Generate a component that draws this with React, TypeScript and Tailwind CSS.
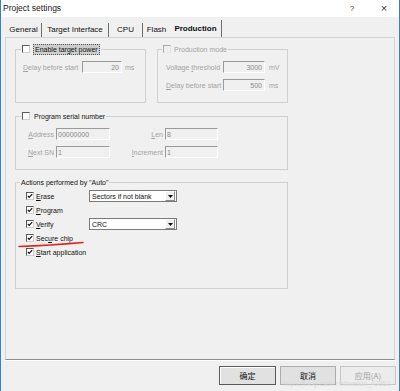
import React from 'react';

const Check = ({ checked, disabled }: { checked?: boolean; disabled?: boolean }) => (
  <span
    className={`inline-flex w-[8px] h-[8px] shrink-0 items-center justify-center border ${
      disabled
        ? 'border-t-[#a8a8a8] border-l-[#a8a8a8] border-b-[#e6e6e6] border-r-[#e6e6e6] bg-[#f0f0f0]'
        : 'border-t-[#5a5a5a] border-l-[#5a5a5a] border-b-[#cfcfcf] border-r-[#cfcfcf] bg-white'
    }`}
  >
    {checked && (
      <svg width="6" height="6" viewBox="0 0 6 6">
        <path d="M0.8 2.8 L2.2 4.3 L5.2 1.2" fill="none" stroke="#111" strokeWidth="1.2" />
      </svg>
    )}
  </span>
);

const Field = ({ value, w }: { value: string; w: string }) => (
  <div
    className={`${w} h-[12px] border border-t-[#9a9a9a] border-l-[#9a9a9a] border-b-white border-r-white bg-[#f0f0f0] text-[#8a8a8a] flex items-center leading-none`}
  >
    {value}
  </div>
);

const Combo = ({ value }: { value: string }) => (
  <div className="w-[88px] h-[12px] border border-[#7a7a7a] bg-white flex items-center">
    <span className="flex-1 pl-[2px] text-[#111] leading-none">{value}</span>
    <span className="w-[10px] h-[10px] mr-[1px] border border-t-white border-l-white border-b-[#8a8a8a] border-r-[#8a8a8a] bg-[#f0f0f0] flex items-center justify-center">
      <svg width="5" height="3" viewBox="0 0 5 3">
        <path d="M0 0 H5 L2.5 3 Z" fill="#111" />
      </svg>
    </span>
  </div>
);

const U = ({ children }: { children: React.ReactNode }) => <span className="underline underline-offset-1">{children}</span>;

const tabs = [
  { label: 'General', w: 'w-[36px]', bar: true },
  { label: 'Target Interface', w: 'w-[67px]', bar: true },
  { label: 'CPU', w: 'w-[34px]', bar: true },
  { label: 'Flash', w: 'w-[27px]', bar: false },
];

export default function App() {
  return (
    <div className="relative w-[400px] h-[391px] overflow-hidden bg-[#f0f0f0] border-l border-r border-[#3d7fc4] flex flex-col font-['Liberation_Sans',Arial,sans-serif] text-[#111] select-none">
      {/* Title bar */}
      <div className="h-[17px] bg-white flex items-center shrink-0">
        <span className="pl-[2px] text-[8.5px] text-[#1a1a1a]">Project settings</span>
        <span className="ml-auto w-[10px] text-center text-[8px] text-[#333] mr-[22px]">?</span>
        <span className="w-[10px] text-center text-[11px] text-[#333] mr-[10px] leading-none">×</span>
      </div>

      {/* Tabs */}
      <div className="h-[20px] flex items-end pl-[5px] text-[8px] shrink-0">
        {tabs.map(t => (
          <div
            key={t.label}
            className={`${t.w} h-[14px] flex items-center justify-center ${t.bar ? 'border-r border-[#6e6e6e]' : ''}`}
          >
            {t.label}
          </div>
        ))}
        <div className="w-[52px] h-[17px] flex items-center justify-center font-bold border-r border-[#6e6e6e]">
          Production
        </div>
      </div>

      {/* Panel */}
      <div className="mx-[4px] h-[323px] border border-[#d4d4d4] border-b-[#8c8c8c] shadow-[0_1px_0_#ffffff] pl-[9px] pt-[6px] text-[7px] leading-none">
        <div className="flex">
          <fieldset className="w-[131px] h-[59px] border border-[#d0d0d0]">
            <legend className="ml-[5px] px-[1px] h-[10px] flex items-center">
              <Check />
              <span className="ml-[3px] px-[1px] py-[1px] bg-[#cdcdcd] border border-dotted border-[#555] text-[#111]">
                Enable target power
              </span>
            </legend>
            <div className="mt-[7px] pl-[7px] flex items-center text-[#a3a3a3]">
              <span className="w-[59px]"><U>D</U>elay before start</span>
              <Field value="20" w="w-[40px] justify-end pr-[2px]" />
              <span className="ml-[3px]">ms</span>
            </div>
          </fieldset>

          <fieldset className="ml-[11px] w-[131px] h-[59px] border border-[#d0d0d0]">
            <legend className="ml-[4px] px-[1px] h-[10px] flex items-center text-[#a3a3a3]">
              <Check disabled />
              <span className="ml-[3px]">Production mode</span>
            </legend>
            <div className="mt-[7px] pl-[8px] flex items-center text-[#a3a3a3]">
              <span className="w-[57px]">Voltage <U>t</U>hreshold</span>
              <Field value="3000" w="w-[42px] justify-end pr-[2px]" />
              <span className="ml-[4px]">mV</span>
            </div>
            <div className="mt-[6px] pl-[8px] flex items-center text-[#a3a3a3]">
              <span className="w-[57px]"><U>D</U>elay before start</span>
              <Field value="500" w="w-[42px] justify-end pr-[2px]" />
              <span className="ml-[4px]">ms</span>
            </div>
          </fieldset>
        </div>

        <fieldset className="mt-[8px] w-[273px] h-[59px] border border-[#d0d0d0]">
          <legend className="ml-[5px] px-[1px] h-[10px] flex items-center">
            <Check />
            <span className="ml-[4px]">Program serial number</span>
          </legend>
          <div className="mt-[7px] flex items-center text-[#a3a3a3]">
            <span className="w-[38px] text-right"><U>A</U>ddress</span>
            <Field value="00000000" w="ml-[2px] w-[54px] pl-[1px]" />
            <span className="w-[53px] text-right"><U>L</U>en</span>
            <Field value="8" w="ml-[2px] w-[53px] pl-[1px]" />
          </div>
          <div className="mt-[6px] flex items-center text-[#a3a3a3]">
            <span className="w-[38px] text-right"><U>N</U>ext SN</span>
            <Field value="1" w="ml-[2px] w-[54px] pl-[1px]" />
            <span className="w-[53px] text-right"><U>I</U>ncrement</span>
            <Field value="1" w="ml-[2px] w-[53px] pl-[1px]" />
          </div>
        </fieldset>

        <fieldset className="mt-[7px] w-[273px] h-[112px] border border-[#d0d0d0]">
          <legend className="ml-[4px] px-[1px] h-[10px] flex items-center">
            Actions performed by &quot;Auto&quot;
          </legend>
          <div className="mt-[2px] pl-[10px] flex flex-col">
            <div className="h-[14px] flex items-center">
              <Check checked />
              <span className="ml-[2px] w-[53px]"><U>E</U>rase</span>
              <Combo value="Sectors if not blank" />
            </div>
            <div className="h-[14px] flex items-center">
              <Check checked />
              <span className="ml-[2px]"><U>P</U>rogram</span>
            </div>
            <div className="h-[14px] flex items-center">
              <Check checked />
              <span className="ml-[2px] w-[53px]"><U>V</U>erify</span>
              <Combo value="CRC" />
            </div>
            <div className="h-[14px] flex items-center">
              <Check checked />
              <span className="ml-[2px]">Sec<U>u</U>re chip</span>
            </div>
            <div className="h-[14px] flex items-center">
              <Check checked />
              <span className="ml-[2px]"><U>S</U>tart application</span>
            </div>
          </div>
        </fieldset>
      </div>

      {/* Buttons */}
      <div className="mt-[6px] flex justify-end gap-[4px] pr-[3px] text-[8px] font-['Noto_Sans_CJK_SC',sans-serif]">
        <button className="w-[57px] h-[19px] bg-[#e1e1e1] border border-[#5a5a5a] shadow-[inset_1px_1px_0_#ffffff] flex items-center justify-center text-[#111] leading-none">
          确定
        </button>
        <button className="w-[56px] h-[19px] bg-[#e1e1e1] border border-[#adadad] flex items-center justify-center text-[#111] leading-none">
          取消
        </button>
        <button className="w-[56px] h-[19px] bg-[#ececec] border border-[#c6c6c6] flex items-center justify-center text-[#a0a0a0] leading-none">
          应用(A)
        </button>
      </div>

      {/* Watermark */}
      <span className="absolute left-[282px] top-[379px] text-[7px] text-[#dadada] whitespace-nowrap">
        https://blog.csdn.net/weixin_43352
      </span>

      {/* Red annotation */}
      <svg className="absolute left-0 top-0 pointer-events-none" width="400" height="391">
        <path d="M18 246.5 Q48 245.5 82 242.5" fill="none" stroke="#e3231c" strokeWidth="1.4" strokeLinecap="round" />
      </svg>
    </div>
  );
}
